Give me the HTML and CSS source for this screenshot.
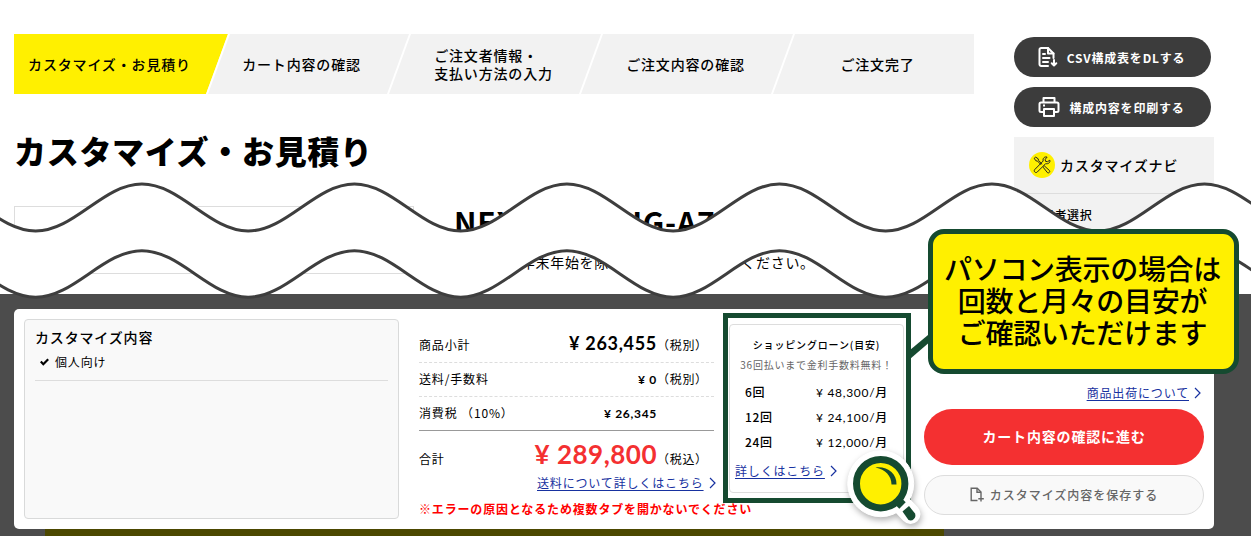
FILE: index.html
```html
<!DOCTYPE html>
<html lang="ja">
<head>
  <meta charset="UTF-8">
  <meta name="viewport" content="width=device-width, initial-scale=1.0">
  <title>カスタマイズ・お見積り</title>
  <link rel="stylesheet" href="styles.css">
</head>
<body>
  <div class="page">
    <div class="upper">
      <main class="main">
        <ol class="steps">
          <li class="step current"><span>カスタマイズ・お見積り</span></li>
          <li class="step"><span>カート内容の確認</span></li>
          <li class="step"><span>ご注文者情報・<br>支払い方法の入力</span></li>
          <li class="step"><span>ご注文内容の確認</span></li>
          <li class="step"><span>ご注文完了</span></li>
        </ol>
        <h1>カスタマイズ・お見積り</h1>
        <div class="product">
          <div class="photo"></div>
          <div class="product-info">
            <h2>NEXTGEAR JG-A7G60</h2>
            <p>土日祝・年末年始を除く期間内にお受取りください。</p>
          </div>
        </div>
      </main>

      <aside class="side">
        <a class="tool-btn">
          <svg width="20" height="20" viewBox="0 0 20 20" fill="none" stroke="#fff" stroke-width="2" stroke-linejoin="round" stroke-linecap="round">
            <path d="M10 19H3.200A1.700 1.700 0 0 1 1.500 17.300V2.700A1.700 1.700 0 0 1 3.200 1H10l5.500 5.500V11"/>
            <path d="M10 1v5.500h5.500M5 7h2M5 11h6.500M5 15h5M16 13v5M13.700 16.300l2.300 2.200 2.300-2.200"/>
          </svg>
          <span>CSV構成表をDLする</span>
        </a>
        <a class="tool-btn">
          <svg width="22" height="20" viewBox="0 0 22 20" fill="none" stroke="#fff" stroke-width="2" stroke-linejoin="round">
            <path d="M5.500 5V1h11v4M5.500 15H3a1.500 1.500 0 0 1-1.500-1.500V7A1.500 1.500 0 0 1 3 5.500h16A1.500 1.500 0 0 1 20.500 7v6.500A1.500 1.500 0 0 1 19 15h-2.500"/>
            <path d="M6 12h10v7H6zM5 8.500h2"/>
          </svg>
          <span>構成内容を印刷する</span>
        </a>
        <div class="navi">
          <div class="navi-title">
            <svg width="26" height="26" viewBox="0 0 26 26">
              <circle cx="13" cy="13" r="13" fill="#fff000"/>
              <g fill="none" stroke="#222" stroke-width="1" stroke-linejoin="round">
                <path d="M5.200 6.300l1.500-1.200 2.500 1.700.3 1.600 3.700 3.600M5.200 6.300l1.700 2.500 1.600.3 3.600 3.700"/>
                <path d="M14.200 15.300l1.300-1.300 5 4.600a1.500 1.500 0 0 1-2 2.100z"/>
                <path d="M20.800 8.200l-2.300 1.500-2-.4-.3-2 1.900-2.200c-2.500-.8-4.700 1.300-3.900 3.900l-8.500 8.600c-1.400 1.700.8 3.900 2.500 2.500l8.500-8.500c2.400.7 4.900-1.100 4.100-3.400z"/>
              </g>
            </svg>
            <span>カスタマイズナビ</span>
          </div>
          <div class="navi-item">使用者選択</div>
        </div>
      </aside>
    </div>

    <div class="dock">
      <div class="panel">
        <section class="summary">
          <h3>カスタマイズ内容</h3>
          <p class="checked">
            <svg width="9" height="8" viewBox="0 0 9 8" fill="none" stroke="#000" stroke-width="2.200"><path d="M.8 3.600l2.500 2.600L8.200 1.300"/></svg>
            個人向け
          </p>
        </section>

        <section class="price">
          <dl class="row first"><dt>商品小計</dt><dd class="subtotal">¥ 263,455</dd><dd class="tax">（税別）</dd></dl>
          <dl class="row"><dt>送料/手数料</dt><dd>¥ 0</dd><dd class="tax">（税別）</dd></dl>
          <dl class="row last"><dt>消費税 （10%）</dt><dd>¥ 26,345</dd><dd class="tax"></dd></dl>
          <dl class="row total"><dt>合計</dt><dd class="amount">¥ 289,800</dd><dd class="tax">（税込）</dd></dl>
          <p class="link-line">
            <a class="link">送料について詳しくはこちら</a>
            <svg class="chevron" width="7" height="12" viewBox="0 0 7 12"><path d="M1 1l5 5-5 5"/></svg>
          </p>
          <p class="warning">※エラーの原因となるため複数タブを開かないでください</p>
        </section>

        <section class="loan">
          <div class="loan-box">
            <h4>ショッピングローン(目安)</h4>
            <p class="note">36回払いまで金利手数料無料！</p>
            <ul>
              <li><b>6回</b><span>¥ 48,300/<b>月</b></span></li>
              <li><b>12回</b><span>¥ 24,100/<b>月</b></span></li>
              <li><b>24回</b><span>¥ 12,000/<b>月</b></span></li>
            </ul>
            <p class="loan-link">
              <a class="link">詳しくはこちら</a>
              <svg class="chevron" width="7" height="12" viewBox="0 0 7 12"><path d="M1 1l5 5-5 5"/></svg>
            </p>
          </div>
        </section>

        <section class="actions">
          <p class="ship">
            <a class="link">商品出荷について</a>
            <svg class="chevron" width="7" height="12" viewBox="0 0 7 12"><path d="M1 1l5 5-5 5"/></svg>
          </p>
          <a class="cart-btn">カート内容の確認に進む</a>
          <a class="save-btn">
            <svg width="14" height="15" viewBox="0 0 14 15" fill="none" stroke="#666" stroke-width="1.400">
              <path d="M7.500 13.500H1.200V1.200h6L11 5v4"/><path d="M7 1v4.200h4M11 9v5.500M8.300 11.700h5.500"/>
            </svg>
            <span>カスタマイズ内容を保存する</span>
          </a>
        </section>
      </div>
      <div class="banner"></div>
    </div>

    <!-- torn strip between the two halves of the page -->
    <svg class="wave" width="1251" height="140" viewBox="0 170 1251 140">
      <path d="M-70.600 184c38.700 0 67.550 47 106.250 47s67.550-47 106.250-47 67.550 47 106.250 47 67.550-47 106.250-47 67.550 47 106.250 47 67.550-47 106.250-47 67.550 47 106.250 47 67.550-47 106.250-47 67.550 47 106.250 47 67.550-47 106.250-47 67.550 47 106.250 47 67.550-47 106.250-47 67.550 47 106.250 47 67.550-47 106.250-47V250.700c-38.700 0-67.550 46.500-106.250 46.500s-67.550-46.500-106.250-46.500-67.550 46.500-106.250 46.500-67.550-46.500-106.250-46.500-67.550 46.500-106.250 46.500-67.550-46.500-106.250-46.500-67.550 46.500-106.250 46.500-67.550-46.500-106.250-46.500-67.550 46.500-106.250 46.500-67.550-46.500-106.250-46.500-67.550 46.500-106.250 46.500-67.550-46.500-106.250-46.500-67.550 46.500-106.250 46.500-67.550-46.500-106.250-46.500z"/>
    </svg>

    <!-- highlight and callout -->
    <div class="frame"></div>
    <svg class="pointer" width="22" height="28" viewBox="0 0 22 28"><path d="M2 18L20 3v8.500L2 27z" fill="#154a30"/></svg>
    <div class="callout">
      <span>パソコン表示の場合は</span>
      <span>回数と月々の目安が</span>
      <span>ご確認いただけます</span>
    </div>
    <svg class="glass" width="84" height="84" viewBox="0 0 84 84">
      <g stroke="#fff" fill="#fff">
        <circle cx="40.700" cy="39.700" r="33"/>
        <path d="M62 61l8.500 9" stroke-width="20" stroke-linecap="round"/>
      </g>
      <path d="M57 56l5.500 5.500" stroke="#154a30" stroke-width="9"/>
      <path d="M62.500 67.500l6.500-5.500 6 7.500a5 5 0 0 1-6.500 6.500z" fill="#154a30"/>
      <circle cx="40.700" cy="39.700" r="24.200" fill="#fff000" stroke="#154a30" stroke-width="7"/>
      <path d="M35.500 23.500c11.500-1.500 21.500 6 21 17h-5c0-8.500-6-15-16-17z" fill="#154a30"/>
    </svg>
  </div>
</body>
</html>
```
FILE: styles.css
```css
* {
  box-sizing: border-box;
  margin: 0;
  padding: 0;
}
body {
  font-family: "Noto Sans CJK JP", sans-serif;
  font-size: 14px;
  letter-spacing: 0.84px;
  color: #000;
  background: #fff;
}
ol, ul {
  list-style: none;
}
.page {
  position: relative;
  width: 1251px;
  height: 536px;
  overflow: hidden;
}
.upper {
  display: flex;
  gap: 40px;
  height: 294px;
  padding: 34px 37px 0 14px;
  overflow: hidden;
}
.main {
  width: 960px;
}

/* order steps */
.steps {
  display: grid;
  grid-template-columns: repeat(5, 192px);
  height: 60px;
  background: #f2f2f2;
}
.step {
  position: relative;
  display: flex;
  align-items: center;
  justify-content: center;
  padding: 0 1px 1px 0;
  font-weight: 500;
  line-height: 18px;
}
.step span {
  position: relative;
}
.step::before {
  content: "";
  position: absolute;
  left: -11px;
  top: 0;
  width: 24px;
  height: 60px;
  background: #fff;
  clip-path: polygon(22px 0, 24px 0, 2px 100%, 0 100%);
}
.step.current::before {
  left: 0;
  width: 214px;
  background: #fff000;
  clip-path: polygon(0 0, 100% 0, 192px 100%, 0 100%);
}
.step:nth-child(2)::before {
  left: 0;
}
h1 {
  margin-top: 32px;
  font-size: 32px;
  font-weight: 900;
  letter-spacing: 0.7px;
  line-height: 48px;
}
.product {
  display: flex;
  gap: 40px;
  margin-top: 32px;
}
.photo {
  width: 400px;
  height: 68px;
  border: 1px solid #ddd;
}
.product-info h2 {
  margin-top: -2px;
  font-size: 30px;
  line-height: 34px;
}
.product-info p {
  padding: 13px 0 0 8px;
  letter-spacing: 0.7px;
  line-height: 22px;
}

/* right column */
.side {
  width: 200px;
}
.tool-btn {
  display: flex;
  align-items: center;
  justify-content: center;
  gap: 9px;
  width: 197px;
  height: 40px;
  margin: 3px 0 10px;
  padding: 0 2px 0 0;
  border-radius: 20px;
  background: #3c3c3c;
  color: #fff;
  font-size: 12px;
  font-weight: 700;
  letter-spacing: 0.8px;
}
.tool-btn + .tool-btn {
  margin-top: 0;
}
.navi {
  height: 160px;
  background: #f2f2f2;
}
.navi-title {
  display: flex;
  align-items: center;
  gap: 5px;
  height: 57px;
  padding-left: 15px;
  border-bottom: 1px solid #ddd;
  font-weight: 500;
}
.navi-item {
  padding: 12px 15px;
  font-size: 12px;
  font-weight: 500;
  letter-spacing: 0.7px;
  line-height: 18px;
}

/* fixed estimate bar */
.dock {
  height: 242px;
  padding: 15px 37px 0 14px;
  background: #4c4c4c;
}
.panel {
  display: flex;
  height: 220px;
  padding: 10px;
  border-radius: 5px;
  background: #fff;
}
.banner {
  width: 899px;
  height: 7px;
  margin-left: 31px;
  background: #4c4800;
}
.summary {
  width: 375px;
  height: 200px;
  padding: 6px 10px;
  border: 1px solid #d9dada;
  border-radius: 4px;
  background: #f9f9f9;
}
.summary h3 {
  font-size: 14px;
  font-weight: 500;
  line-height: 22px;
}
.checked {
  display: flex;
  align-items: center;
  gap: 6px;
  height: 33px;
  padding: 0 0 5px 5px;
  border-bottom: 1px solid #ddd;
  font-size: 12px;
}
.price {
  width: 295px;
  margin-left: 20px;
  padding-top: 10px;
  font-size: 12px;
  white-space: nowrap;
}
.row {
  display: flex;
  align-items: baseline;
  height: 34px;
  padding-top: 7px;
  border-bottom: 1px dashed #ddd;
  line-height: 18px;
}
.row.first {
  padding-top: 5px;
}
.row dd {
  flex: 1;
  font-family: Lato, "Noto Sans CJK JP", sans-serif;
  font-weight: 700;
  letter-spacing: 0.7px;
  text-align: right;
}
.row .subtotal {
  font-size: 18px;
}
.row dd.tax {
  flex: none;
  width: 57px;
  font-family: inherit;
  font-weight: 400;
  text-align: left;
}
.row.last {
  border-bottom: 1px solid #999;
}
.row.total {
  height: 42px;
  padding-top: 14px;
  border: 0;
}
.row .amount {
  color: #f43031;
  font-size: 26px;
  letter-spacing: 0.5px;
}
.link {
  color: #1731a0;
  text-decoration: underline;
  text-underline-offset: 2px;
}
.chevron {
  flex: none;
  fill: none;
  stroke: #1731a0;
  stroke-width: 1.200;
}
.link-line,
.ship,
.loan-link {
  display: flex;
  align-items: center;
  gap: 5px;
  font-size: 12px;
  line-height: 18px;
}
.link-line {
  margin: 1px -3px 0 118px;
}
.warning {
  margin-top: 8px;
  color: #f00;
  font-weight: 700;
  line-height: 18px;
}
.loan {
  margin: 5px 0 0 15px;
}
.loan-box {
  width: 175px;
  height: 169px;
  padding: 11px 5px 0;
  border: 1px solid #ddd;
  border-radius: 4px;
}
.loan-box h4 {
  font-size: 10px;
  font-weight: 500;
  line-height: 18px;
  text-align: center;
}
.note {
  margin: 0 -5px 3px;
  color: #666;
  font-size: 10px;
  letter-spacing: 0.75px;
  line-height: 22px;
  text-align: center;
  white-space: nowrap;
}
.loan-box li {
  display: flex;
  justify-content: space-between;
  height: 25px;
  margin: 0 10px;
  font-family: Lato, "Noto Sans CJK JP", sans-serif;
  font-size: 12px;
  letter-spacing: 0.7px;
  line-height: 25px;
}
.loan-box li b {
  font-family: "Noto Sans CJK JP", sans-serif;
  font-weight: 500;
}
.loan-link {
  margin-top: 8px;
}
.actions {
  flex: 1;
  margin-left: 20px;
  padding-top: 65px;
}
.ship {
  justify-content: flex-end;
  padding-right: 3px;
}
.cart-btn,
.save-btn {
  display: flex;
  align-items: center;
  justify-content: center;
}
.cart-btn {
  height: 56px;
  margin: 7px 0 10px;
  padding-bottom: 2px;
  border-radius: 28px;
  background: #f43031;
  color: #fff;
  font-weight: 700;
}
.save-btn {
  gap: 6px;
  height: 40px;
  padding-bottom: 2px;
  border: 1px solid #ddd;
  border-radius: 20px;
  background: #f9f9f9;
  color: #666;
  font-size: 12px;
  font-weight: 500;
  letter-spacing: 1px;
}

/* overlays */
.wave {
  position: absolute;
  left: 0;
  top: 170px;
  fill: #fff;
  stroke: #3e3e3e;
  stroke-width: 3;
}
.frame {
  position: absolute;
  left: 723px;
  top: 313px;
  width: 188px;
  height: 190px;
  border: 5px solid #154a30;
}
.pointer {
  position: absolute;
  left: 908px;
  top: 332px;
}
.callout {
  position: absolute;
  left: 928px;
  top: 229px;
  display: flex;
  flex-direction: column;
  align-items: center;
  width: 311px;
  height: 145px;
  padding: 18px 2px 0 0;
  border: 5px solid #154a30;
  border-radius: 16px;
  background: #fff000;
  font-size: 28px;
  font-weight: 500;
  letter-spacing: -0.3px;
  line-height: 32px;
}
.glass {
  position: absolute;
  left: 840px;
  top: 444px;
  overflow: visible;
  filter: drop-shadow(1px 3px 3px rgba(0, 0, 0, 0.3));
}
```
